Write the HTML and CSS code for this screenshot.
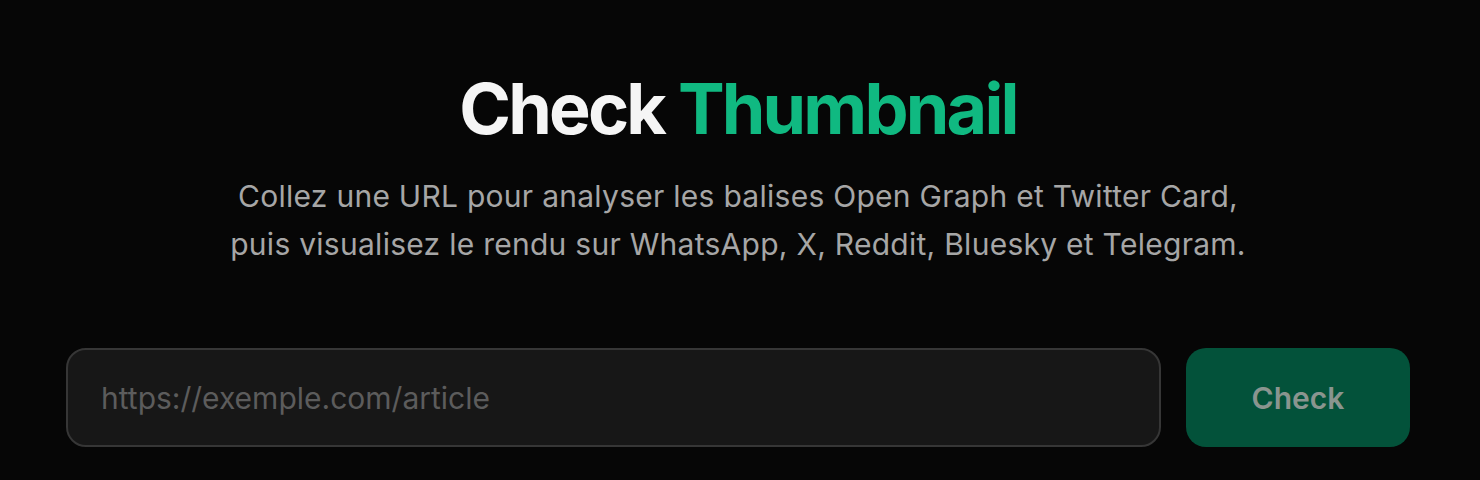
FILE: index.html
```html
<!DOCTYPE html>
<html lang="fr">
<head>
<meta charset="utf-8">
<title>Check Thumbnail</title>
<link rel="stylesheet" href="styles.css">
</head>
<body>
<main class="page">
  <header class="hero">
    <h1 class="title">Check <span class="accent">Thumbnail</span></h1>
    <p class="lead">Collez une URL pour analyser les balises Open Graph et Twitter Card,<br>puis visualisez le rendu sur WhatsApp, X, Reddit, Bluesky et Telegram.</p>
  </header>
  <form class="search">
    <input class="url-input" type="url" placeholder="https://exemple.com/article">
    <button class="check-btn" type="button" disabled>Check</button>
  </form>
</main>
</body>
</html>
```

FILE: styles.css
```css
* { box-sizing: border-box; }
html, body {
  margin: 0;
  padding: 0;
  background: #060606;
  height: 100%;
}
body {
  font-family: Inter, "Noto Sans", "Liberation Sans", sans-serif;
  color: #f5f5f5;
}
.page {
  padding: 66px 70px 0 66px;
}
.hero {
  display: flex;
  flex-direction: column;
  align-items: center;
  text-align: center;
}
.title {
  margin: 0;
  font-size: 70px;
  line-height: 86px;
  font-weight: 700;
  letter-spacing: -0.04em;
  color: #f5f5f5;
}
.accent { color: #10b981; }
.lead {
  margin: 20px 0 0;
  font-size: 30px;
  line-height: 48px;
  letter-spacing: 0.009em;
  color: #a6a6a6;
  font-weight: 400;
}
.search {
  margin-top: 80px;
  display: flex;
  gap: 25px;
}
.url-input {
  flex: 1;
  height: 99px;
  border: 2px solid #363636;
  border-radius: 20px;
  background: #171717;
  padding: 0 33px;
  font-family: inherit;
  font-size: 30px;
  color: #e5e5e5;
  outline: none;
}
.url-input::placeholder { color: #5c5c5c; }
.check-btn {
  width: 224px;
  height: 99px;
  border: none;
  border-radius: 20px;
  background: #03523a;
  color: #8a958f;
  font-family: inherit;
  font-size: 30px;
  font-weight: 600;
}
```
